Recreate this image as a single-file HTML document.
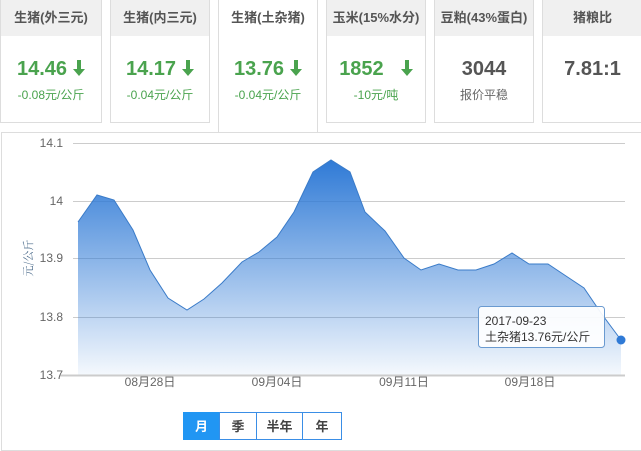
<!DOCTYPE html><html><head><meta charset="utf-8"><style>
body{margin:0;width:641px;height:451px;background:#fff;font-family:"Liberation Sans","Noto Sans CJK SC",sans-serif;position:relative;overflow:hidden}
.c{position:absolute;top:0;height:122px;border:1px solid #ddd;border-top:none;background:#fff;text-align:center}
.c .h{height:36px;line-height:36px;background:#f0f0f0;font-size:13px;font-weight:bold;color:#555}
.c .v{margin-top:20px;font-size:20px;font-weight:bold;color:#4aa34e;height:26px;line-height:26px}
.c .v.g{color:#555}
.c .s{font-size:12px;color:#4aa34e;margin-top:4px}
.c .s.g{color:#666}
.a{height:132px;border-bottom:none;z-index:2}
.a .h{background:#fff}
.ar{display:inline-block;vertical-align:-1px;margin-left:6px}
.panel{position:absolute;left:1px;top:132px;width:640px;height:317px;border:1px solid #ddd;border-right:none}
.bt{position:absolute;top:412px;height:28px;line-height:28px;font-size:13px;font-weight:bold;color:#444;text-align:center;border:1px solid #3a8ee6;box-sizing:border-box;background:#fff}
</style></head><body>
<div class="c" style="left:0;width:100px"><div class="h">生猪(外三元)</div><div class="v">14.46<svg class="ar" width="12" height="16" viewBox="0 0 12 16"><path d="M4 0h4v9h4l-6 7-6-7h4z" fill="#4aa34e"/></svg></div><div class="s">-0.08元/公斤</div></div>
<div class="c" style="left:110px;width:98px"><div class="h">生猪(内三元)</div><div class="v">14.17<svg class="ar" width="12" height="16" viewBox="0 0 12 16"><path d="M4 0h4v9h4l-6 7-6-7h4z" fill="#4aa34e"/></svg></div><div class="s">-0.04元/公斤</div></div>
<div class="c a" style="left:218px;width:98px"><div class="h">生猪(土杂猪)</div><div class="v">13.76<svg class="ar" width="12" height="16" viewBox="0 0 12 16"><path d="M4 0h4v9h4l-6 7-6-7h4z" fill="#4aa34e"/></svg></div><div class="s">-0.04元/公斤</div></div>
<div class="c" style="left:326px;width:98px"><div class="h">玉米(15%水分)</div><div class="v">1852 &nbsp;<svg class="ar" width="12" height="16" viewBox="0 0 12 16"><path d="M4 0h4v9h4l-6 7-6-7h4z" fill="#4aa34e"/></svg></div><div class="s">-10元/吨</div></div>
<div class="c" style="left:434px;width:98px"><div class="h">豆粕(43%蛋白)</div><div class="v g">3044</div><div class="s g">报价平稳</div></div>
<div class="c" style="left:542px;width:99px"><div class="h">猪粮比</div><div class="v g">7.81:1</div></div>
<div class="panel"></div>
<svg style="position:absolute;left:0;top:0" width="641" height="451">
<defs><linearGradient id="g" x1="0" y1="0" x2="0" y2="1"><stop offset="0" stop-color="#2f7ad6"/><stop offset="1" stop-color="#2f7ad6" stop-opacity="0.05"/></linearGradient></defs>
<g stroke="#ccc" stroke-width="1"><line x1="73" y1="143.5" x2="625" y2="143.5"/><line x1="73" y1="201.5" x2="625" y2="201.5"/><line x1="73" y1="258.5" x2="625" y2="258.5"/><line x1="73" y1="317.5" x2="625" y2="317.5"/></g>
<path d="M78,222 L97,195 114,200 133,230 150,270 168,298 187,310 204,299 222,283 242,262 259,252 277,237 294,212 313,172 331,160 350,172 365,212 385,231 404,258 421,270 439,264 458,270 476,270 494,264 512,253 529,264 548,264 566,276 584,288 601,313 621,340 L621,375 L78,375Z" fill="url(#g)"/>
<path d="M78,222 L97,195 114,200 133,230 150,270 168,298 187,310 204,299 222,283 242,262 259,252 277,237 294,212 313,172 331,160 350,172 365,212 385,231 404,258 421,270 439,264 458,270 476,270 494,264 512,253 529,264 548,264 566,276 584,288 601,313 621,340" fill="none" stroke="#3a7bc8" stroke-width="1"/>
<line x1="60" y1="375.5" x2="625" y2="375.5" stroke="#ccc" stroke-width="2"/>
<g fill="#666" font-size="12" text-anchor="end" font-family="Liberation Sans,sans-serif"><text x="63" y="147">14.1</text><text x="63" y="205">14</text><text x="63" y="262">13.9</text><text x="63" y="321">13.8</text><text x="63" y="379">13.7</text></g>
<text transform="translate(32,258) rotate(-90)" text-anchor="middle" font-size="11" fill="#4a6a8a" font-family="Noto Serif CJK SC,serif">元/公斤</text>
<g fill="#666" font-size="12" text-anchor="middle"><text x="150" y="386">08月28日</text><text x="277" y="386">09月04日</text><text x="404" y="386">09月11日</text><text x="530" y="386">09月18日</text></g>
<rect x="478.5" y="306.5" width="126" height="41" rx="3" fill="#fff" fill-opacity="0.92" stroke="#6a9ad0"/>
<text x="485" y="325" font-size="12" fill="#333">2017-09-23</text><text x="485" y="341" font-size="12" fill="#333">土杂猪13.76元/公斤</text>
<circle cx="621" cy="340" r="4.5" fill="#2f7ad6"/>
</svg>
<div class="bt" style="left:183px;width:37px;background:#2196f3;border-color:#2196f3;color:#fff">月</div>
<div class="bt" style="left:219px;width:38px">季</div>
<div class="bt" style="left:256px;width:47px">半年</div>
<div class="bt" style="left:302px;width:40px">年</div>
</body></html>
